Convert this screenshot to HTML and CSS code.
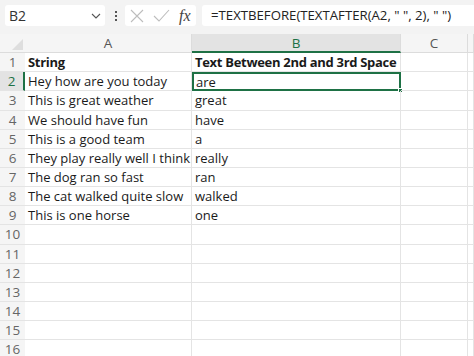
FILE: index.html
```html
<!DOCTYPE html>
<html lang="en">

<head>
    <meta charset="UTF-8">
    <title>Sheet</title>
    <link rel="stylesheet" href="styles.css">
</head>

<body>
    <div class="toolbar">
        <div class="name-box">
            <span>B2</span>
            <svg class="chevron" width="10" height="6" viewBox="0 0 10 6"><path d="M1 1 L5 5 L9 1" fill="none" stroke="#555" stroke-width="1.1"/></svg>
        </div>
        <div class="dots"><i></i><i></i><i></i></div>
        <div class="fx-box">
            <svg width="14" height="14" viewBox="0 0 14 14"><path d="M1 1 L13 13 M13 1 L1 13" stroke="#bdbdbd" stroke-width="1.1"/></svg>
            <svg width="17" height="14" viewBox="0 0 17 14"><path d="M1 7 L6 12 L16 1" fill="none" stroke="#bdbdbd" stroke-width="1.1"/></svg>
            <span class="fx">fx</span>
        </div>
        <div class="formula">=TEXTBEFORE(TEXTAFTER(A2, " ", 2), " ")</div>
    </div>

    <div class="sheet">
        <div class="corner"><span></span></div>
        <div class="col-head">A</div>
        <div class="col-head selected">B</div>
        <div class="col-head">C</div>
        <div class="col-head"></div>

        <div class="row-head">1</div>
        <div class="cell bold">String</div>
        <div class="cell bold">Text Between 2nd and 3rd Space</div>
        <div class="cell"></div>
        <div class="cell"></div>

        <div class="row-head selected">2</div>
        <div class="cell">Hey how are you today</div>
        <div class="cell active">are<span class="handle"></span></div>
        <div class="cell"></div>
        <div class="cell"></div>

        <div class="row-head">3</div>
        <div class="cell">This is great weather</div>
        <div class="cell">great</div>
        <div class="cell"></div>
        <div class="cell"></div>

        <div class="row-head">4</div>
        <div class="cell">We should have fun</div>
        <div class="cell">have</div>
        <div class="cell"></div>
        <div class="cell"></div>

        <div class="row-head">5</div>
        <div class="cell">This is a good team</div>
        <div class="cell">a</div>
        <div class="cell"></div>
        <div class="cell"></div>

        <div class="row-head">6</div>
        <div class="cell">They play really well I think</div>
        <div class="cell">really</div>
        <div class="cell"></div>
        <div class="cell"></div>

        <div class="row-head">7</div>
        <div class="cell">The dog ran so fast</div>
        <div class="cell">ran</div>
        <div class="cell"></div>
        <div class="cell"></div>

        <div class="row-head">8</div>
        <div class="cell">The cat walked quite slow</div>
        <div class="cell">walked</div>
        <div class="cell"></div>
        <div class="cell"></div>

        <div class="row-head">9</div>
        <div class="cell">This is one horse</div>
        <div class="cell">one</div>
        <div class="cell"></div>
        <div class="cell"></div>

        <div class="row-head">10</div><div class="cell"></div><div class="cell"></div><div class="cell"></div><div class="cell"></div>
        <div class="row-head">11</div><div class="cell"></div><div class="cell"></div><div class="cell"></div><div class="cell"></div>
        <div class="row-head">12</div><div class="cell"></div><div class="cell"></div><div class="cell"></div><div class="cell"></div>
        <div class="row-head">13</div><div class="cell"></div><div class="cell"></div><div class="cell"></div><div class="cell"></div>
        <div class="row-head">14</div><div class="cell"></div><div class="cell"></div><div class="cell"></div><div class="cell"></div>
        <div class="row-head">15</div><div class="cell"></div><div class="cell"></div><div class="cell"></div><div class="cell"></div>
        <div class="row-head">16</div><div class="cell"></div><div class="cell"></div><div class="cell"></div><div class="cell"></div>
    </div>
</body>

</html>
```

FILE: styles.css
```css
/* Reset styles */
* {
    margin: 0;
    padding: 0;
    box-sizing: border-box;
}

body {
    width: 474px;
    height: 356px;
    overflow: hidden;
    background-color: #fff;
    font-family: "Open Sans", "Noto Sans", sans-serif;
    color: #222;
}

/* Formula bar */
.toolbar {
    display: flex;
    align-items: center;
    height: 34px;
    padding: 0 0 3px 5px;
    background-color: #f3f3f3;
}

.name-box {
    display: flex;
    align-items: center;
    justify-content: space-between;
    width: 100px;
    height: 21px;
    padding: 0 4px 0 4px;
    background-color: #fff;
    border-radius: 3px;
    font-size: 14px;
    color: #333;
}

.dots {
    display: flex;
    flex-direction: column;
    gap: 2px;
    margin: 0 8px 0 10px;
}

.dots i {
    display: block;
    width: 2px;
    height: 2px;
    background-color: #555;
}

.fx-box {
    display: flex;
    align-items: center;
    gap: 9px;
    width: 71px;
    height: 21px;
    padding: 0 4px 0 5px;
    background-color: #fff;
    border-radius: 3px;
}

.fx {
    font-family: "Liberation Serif", serif;
    font-style: italic;
    font-size: 16px;
    color: #444;
    line-height: 1;
}

.formula {
    flex: 1;
    height: 21px;
    margin-left: 6px;
    padding-left: 9px;
    background-color: #fff;
    border-radius: 3px 0 0 3px;
    font-size: 13.2px;
    line-height: 21px;
    color: #222;
    white-space: nowrap;
}

/* Grid */
.sheet {
    display: grid;
    grid-template-columns: 25px 167px 209px 67px 1fr;
    grid-auto-rows: 19.15px;
}

.corner {
    position: relative;
    background-color: #f5f5f5;
    border-bottom: 1px solid #dcdcdc;
}

.corner span {
    position: absolute;
    right: 2px;
    bottom: 2px;
    width: 0;
    height: 0;
    border-left: 11px solid transparent;
    border-bottom: 11px solid #dedede;
}

.col-head {
    background-color: #f5f5f5;
    border-right: 1px solid #dcdcdc;
    border-bottom: 1px solid #dcdcdc;
    text-align: center;
    font-size: 13.5px;
    line-height: 19px;
    color: #555;
}

.col-head.selected {
    background-color: #e3e3e3;
    border-bottom: 2px solid #1e7145;
    color: #1e7145;
}

.row-head {
    background-color: #f5f5f5;
    border-bottom: 1px solid #e4e4e4;
    text-align: center;
    font-size: 13.5px;
    line-height: 19px;
    color: #666;
    white-space: nowrap;
}

.row-head.selected {
    background-color: #e3e3e3;
    border-right: 2px solid #1e7145;
    color: #1e7145;
}

.cell {
    position: relative;
    border-right: 1px solid #e4e4e4;
    border-bottom: 1px solid #e4e4e4;
    padding-left: 3px;
    font-size: 13px;
    line-height: 19px;
    white-space: nowrap;
    color: #1a1a1a;
}

.cell.bold {
    font-weight: bold;
    letter-spacing: -0.3px;
}

.cell.active {
    border: 2px solid #1e7145;
    padding-left: 2px;
    line-height: 16px;
}

.handle {
    position: absolute;
    right: -4px;
    bottom: -4px;
    width: 5px;
    height: 5px;
    background-color: #1e7145;
    border: 1px solid #fff;
}
```
